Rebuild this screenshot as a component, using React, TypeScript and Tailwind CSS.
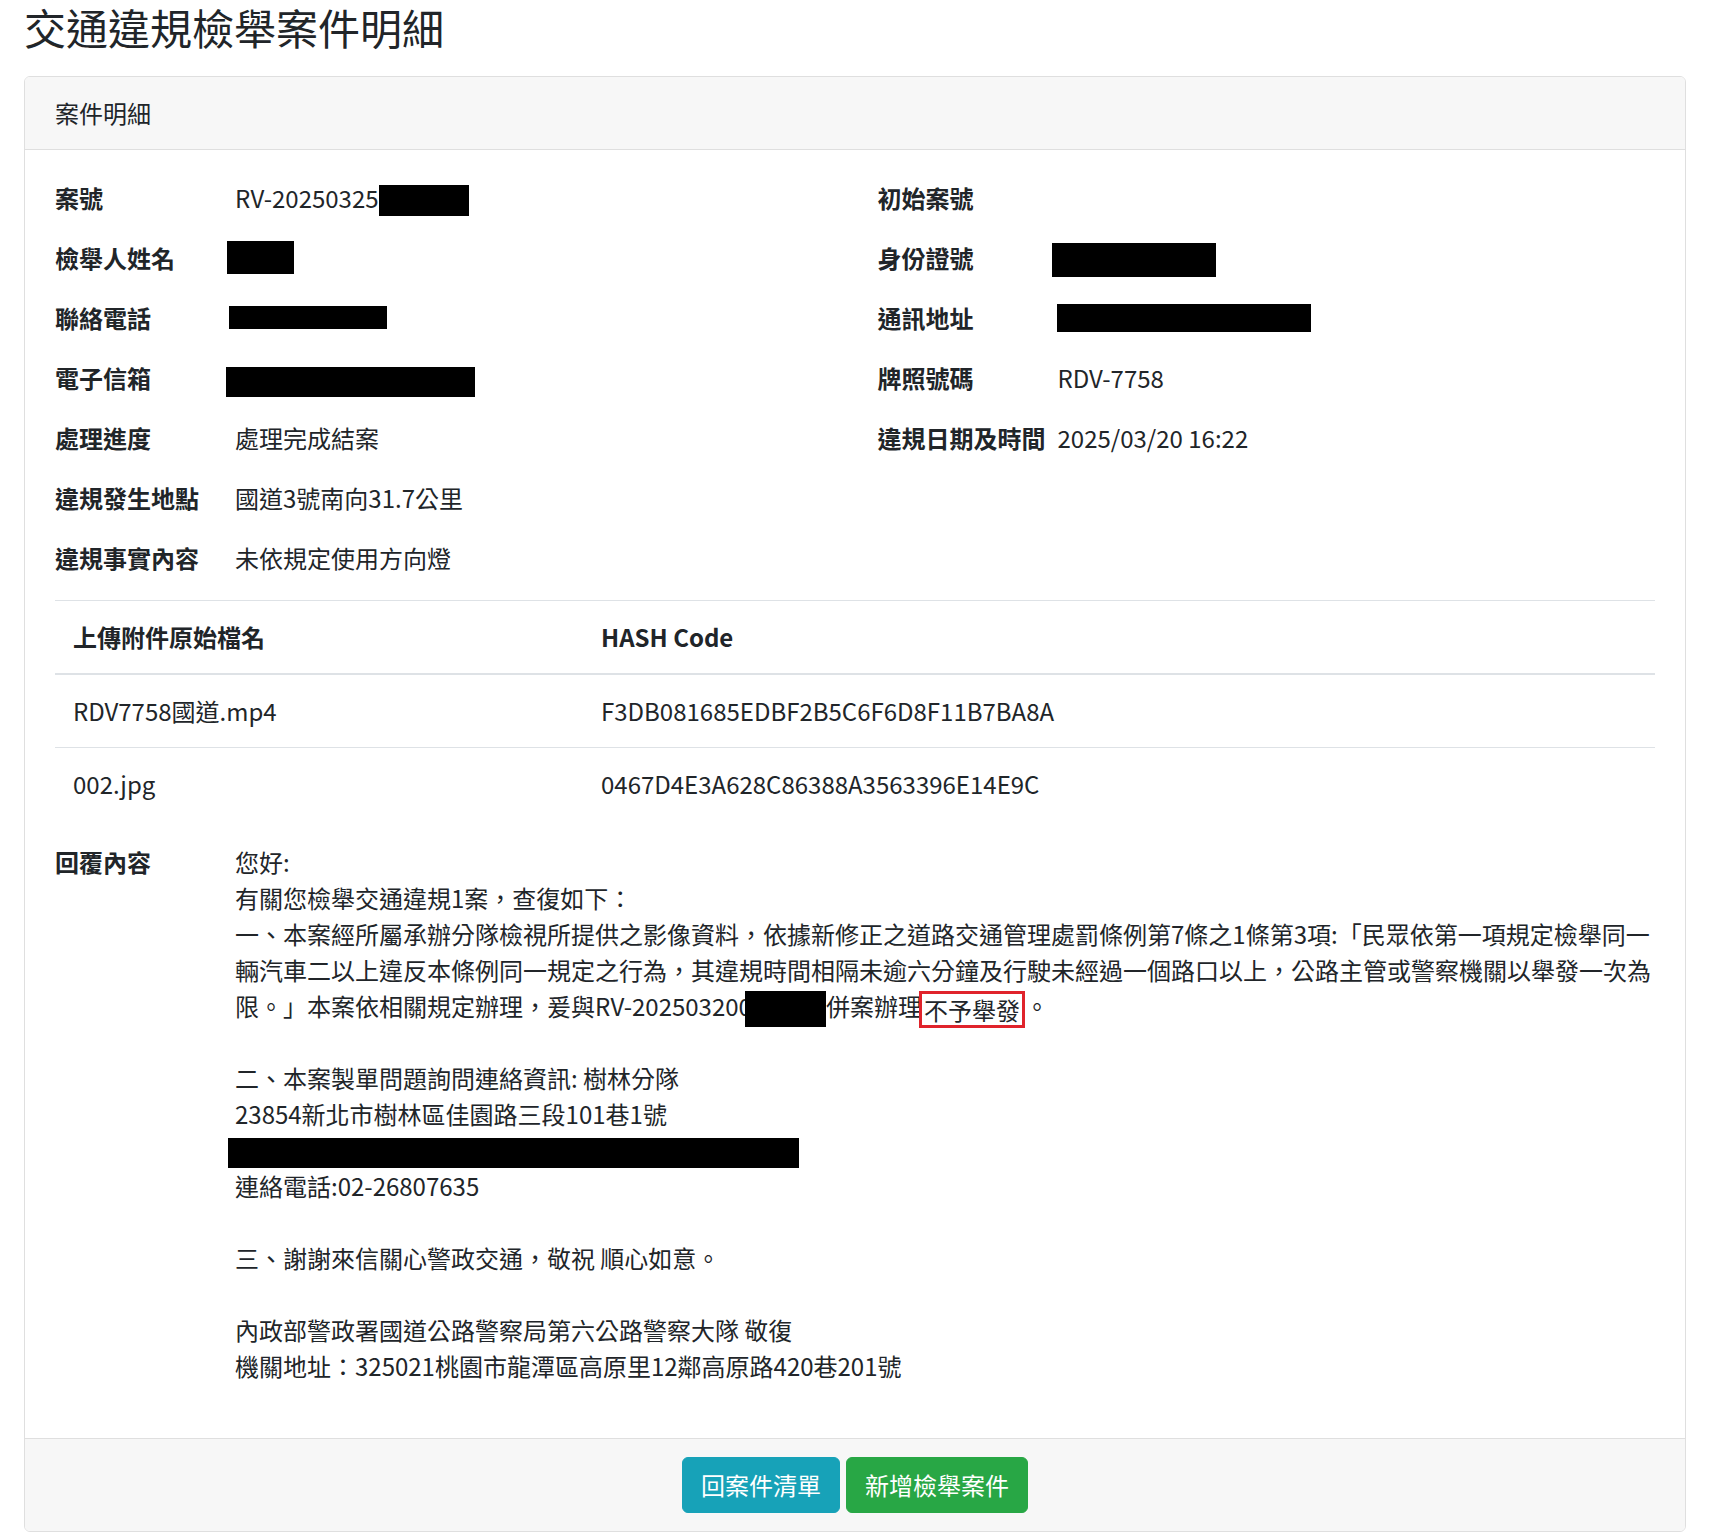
import React from "react";

const ink = "text-[#212529]";

function Redact({ className }: { className: string }) {
  return <div className={"shrink-0 bg-black " + className} />;
}

function Field({ label, children }: { label?: string; children?: React.ReactNode }) {
  if (!label) return <div className="h-9" />;
  return (
    <div className="flex h-9 leading-9">
      <div className="w-[180px] shrink-0 font-bold">{label}</div>
      <div className="flex min-w-0 flex-1 items-start whitespace-nowrap">{children}</div>
    </div>
  );
}

export default function App() {
  return (
    <div className={"min-h-screen bg-white px-6 font-['Noto_Sans_CJK_TC',sans-serif] text-[24px] " + ink}>
      <h3 className="mb-[22px] text-[42px] leading-[54px] font-normal">交通違規檢舉案件明細</h3>

      <div className="overflow-hidden rounded-[6px] border border-[#dfdfdf]">
        <div className="border-b border-[#dfdfdf] bg-[#f7f7f7] px-[30px] py-[18px] leading-9">案件明細</div>

        <div className="p-[30px]">
          <div className="mb-6 grid grid-cols-2 gap-x-[45px] gap-y-6">
            <Field label="案號">
              RV-20250325
              <Redact className="mt-[5px] h-[31px] w-[90px]" />
            </Field>
            <Field label="初始案號" />

            <Field label="檢舉人姓名">
              <Redact className="ml-[-8px] mt-[1px] h-[33px] w-[67px]" />
            </Field>
            <Field label="身份證號">
              <Redact className="ml-[-6px] mt-[3px] h-[34px] w-[164px]" />
            </Field>

            <Field label="聯絡電話">
              <Redact className="ml-[-6px] mt-[6px] h-[23px] w-[158px]" />
            </Field>
            <Field label="通訊地址">
              <Redact className="ml-[-1px] mt-[4px] h-[28px] w-[254px]" />
            </Field>

            <Field label="電子信箱">
              <Redact className="ml-[-9px] mt-[7px] h-[30px] w-[249px]" />
            </Field>
            <Field label="牌照號碼">RDV-7758</Field>

            <Field label="處理進度">處理完成結案</Field>
            <Field label="違規日期及時間">2025/03/20 16:22</Field>

            <Field label="違規發生地點">國道3號南向31.7公里</Field>
            <Field />

            <Field label="違規事實內容">未依規定使用方向燈</Field>
            <Field />
          </div>

          <table className="mb-6 w-full leading-9">
            <thead>
              <tr>
                <th className="w-[528px] border-t border-b-2 border-[#dee2e6] p-[18px] text-left font-bold">上傳附件原始檔名</th>
                <th className="border-t border-b-2 border-[#dee2e6] p-[18px] text-left font-bold">HASH Code</th>
              </tr>
            </thead>
            <tbody>
              <tr>
                <td className="border-t border-[#dee2e6] p-[18px]">RDV7758國道.mp4</td>
                <td className="border-t border-[#dee2e6] p-[18px]">F3DB081685EDBF2B5C6F6D8F11B7BA8A</td>
              </tr>
              <tr>
                <td className="border-t border-[#dee2e6] p-[18px]">002.jpg</td>
                <td className="border-t border-[#dee2e6] p-[18px]">0467D4E3A628C86388A3563396E14E9C</td>
              </tr>
            </tbody>
          </table>

          <div className="mb-6 flex leading-9">
            <div className="w-[180px] shrink-0 font-bold">回覆內容</div>
            <div className="min-w-0 flex-1 whitespace-nowrap">
              <div>您好:</div>
              <div>有關您檢舉交通違規1案，查復如下：</div>
              <div>一、本案經所屬承辦分隊檢視所提供之影像資料，依據新修正之道路交通管理處罰條例第7條之1條第3項:「民眾依第一項規定檢舉同一</div>
              <div>輛汽車二以上違反本條例同一規定之行為，其違規時間相隔未逾六分鐘及行駛未經過一個路口以上，公路主管或警察機關以舉發一次為</div>
              <div className="flex h-9 items-start">
                <span>限。」本案依相關規定辦理，爰與RV-202503200</span>
                <Redact className="ml-[-7px] mt-[3px] h-9 w-[81px]" />
                <span>併案辦理</span>
                <span className="ml-[-3px] mt-[3px] inline-flex h-[37px] items-center border-[3px] border-[#e0232b] px-[2px] leading-none">不予舉發</span>
                <span>。</span>
              </div>
              <div className="h-9" />
              <div>二、本案製單問題詢問連絡資訊: 樹林分隊</div>
              <div>23854新北市樹林區佳園路三段101巷1號</div>
              <div className="flex h-9 items-start">
                <Redact className="ml-[-7px] mt-[6px] h-[30px] w-[571px]" />
              </div>
              <div>連絡電話:02-26807635</div>
              <div className="h-9" />
              <div>三、謝謝來信關心警政交通，敬祝 順心如意。</div>
              <div className="h-9" />
              <div>內政部警政署國道公路警察局第六公路警察大隊 敬復</div>
              <div>機關地址：325021桃園市龍潭區高原里12鄰高原路420巷201號</div>
            </div>
          </div>
        </div>

        <div className="flex justify-center gap-[6px] border-t border-[#dfdfdf] bg-[#f7f7f7] py-[18px]">
          <button className="h-[56px] rounded-[6px] border border-[#17a2b8] bg-[#17a2b8] px-[18px] leading-9 text-white">回案件清單</button>
          <button className="h-[56px] rounded-[6px] border border-[#28a745] bg-[#28a745] px-[18px] leading-9 text-white">新增檢舉案件</button>
        </div>
      </div>
    </div>
  );
}
